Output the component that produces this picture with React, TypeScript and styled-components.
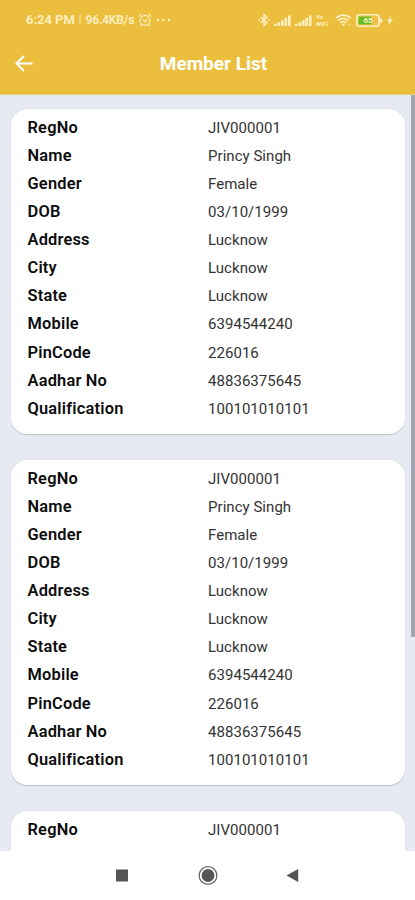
import React from 'react';
import styled, { createGlobalStyle } from 'styled-components';

const GlobalStyle = createGlobalStyle`
  * { box-sizing: border-box; }
  body { margin: 0; background: #fff; font-family: Roboto, "Liberation Sans", sans-serif; }
`;

const Screen = styled.div`
  width: 415px;
  height: 900px;
  display: flex;
  flex-direction: column;
  overflow: hidden;
  background: #fff;
`;

const Header = styled.header`
  flex: none;
  height: 95px;
  background: #ebbf3d;
  border-bottom: 1px solid #efcd6c;
  color: #fff;
`;

const StatusBar = styled.div`
  height: 39px;
  padding: 1px 22px 0 26px;
  display: flex;
  align-items: center;
  justify-content: space-between;
  color: #fff0c4;
`;

const StatusGroup = styled.div<{ $gap: number }>`
  display: flex;
  align-items: center;
  gap: ${({ $gap }) => $gap}px;
`;

const StatusText = styled.span<{ $size: number; $spacing?: number; $weight?: number }>`
  font-size: ${({ $size }) => $size}px;
  font-weight: ${({ $weight }) => $weight ?? 600};
  letter-spacing: ${({ $spacing }) => $spacing ?? 0}px;
  line-height: 16px;
  white-space: nowrap;
`;

const VoWifi = styled.span`
  display: flex;
  flex-direction: column;
  width: 15px;
  font-size: 6px;
  font-weight: 700;
  line-height: 7px;
`;

const TitleBar = styled.div`
  height: 50px;
  padding: 0 2px 0 14px;
  display: grid;
  grid-template-columns: 20px 1fr 20px;
  align-items: center;
`;

const Title = styled.h1`
  margin: 0;
  text-align: center;
  font-size: 19px;
  font-weight: 700;
  line-height: 24px;
`;

const Content = styled.main`
  flex: none;
  height: 756px;
  display: flex;
  overflow: hidden;
  background: #e7e9f3;
`;

const CardList = styled.div`
  flex: 1;
  padding: 14px 6px 0 11px;
  display: flex;
  flex-direction: column;
  gap: 26px;
`;

const Card = styled.section`
  flex: none;
  height: 325px;
  padding: 5px 17px 0 16.5px;
  background: #fff;
  border-radius: 16px;
  box-shadow: 0 0.5px 1px rgba(70, 72, 85, 0.25);
`;

const Row = styled.div`
  height: 28.07px;
  display: grid;
  grid-template-columns: 180.5px 1fr;
  align-items: center;
  line-height: 28px;
  white-space: nowrap;
`;

const Label = styled.span`
  color: #0c0c0c;
  font-size: 16.4px;
  font-weight: 600;
  letter-spacing: 0.2px;
`;

const Value = styled.span`
  color: #333;
  font-size: 15px;
  font-weight: 400;
  letter-spacing: 0.04px;
`;

const ScrollTrack = styled.div`
  flex: none;
  width: 4px;
`;

const ScrollThumb = styled.div`
  height: 542px;
  background: #a0a6b1;
`;

const NavBar = styled.nav`
  flex: 1;
  display: flex;
  justify-content: center;
  padding: 14px 4px 0 0;
`;

const Icon = styled.svg`
  display: block;
  flex: none;
`;

type Member = [label: string, value: string][];

const profile: Member = [
  ['RegNo', 'JIV000001'],
  ['Name', 'Princy Singh'],
  ['Gender', 'Female'],
  ['DOB', '03/10/1999'],
  ['Address', 'Lucknow'],
  ['City', 'Lucknow'],
  ['State', 'Lucknow'],
  ['Mobile', '6394544240'],
  ['PinCode', '226016'],
  ['Aadhar No', '48836375645'],
  ['Qualification', '100101010101'],
];

const members: Member[] = [profile, profile, [['RegNo', 'JIV000001']]];

const MemberCard = ({ member }: { member: Member }) => (
  <Card>
    {member.map(([label, value]) => (
      <Row key={label}>
        <Label>{label}</Label>
        <Value>{value}</Value>
      </Row>
    ))}
  </Card>
);

const Signal = () => (
  <Icon width="17" height="11" viewBox="0 0 17 11" fill="currentColor">
    <path d="M0 8.8h2.6V11H0zM3.5 7.2h2.6V11H3.5zM7 5h2.6v6H7zM10.5 2.8h2.6V11h-2.6zM14 .5h2.6V11H14z" />
  </Icon>
);

const Alarm = () => (
  <Icon width="14" height="14" viewBox="0 0 14 14" fill="none" stroke="currentColor" strokeWidth="1.1" strokeLinecap="round">
    <circle cx="7" cy="7.4" r="5" />
    <path d="M1 3.2 3.3 1.2M13 3.2 10.7 1.2M4.8 6.8 7 8.5 9.3 6.8M3.4 11.5 2.4 12.8M10.6 11.5l1 1.3" />
  </Icon>
);

const Dots = () => (
  <Icon width="15" height="4" viewBox="0 0 15 4" fill="currentColor">
    <circle cx="1.8" cy="2" r="1.2" />
    <circle cx="7.4" cy="2" r="1.2" />
    <circle cx="13" cy="2" r="1.2" />
  </Icon>
);

const Bluetooth = () => (
  <Icon width="12" height="14" viewBox="0 0 12 14" fill="none" stroke="currentColor" strokeWidth="1.4">
    <path d="M2.5 4 9 9.8 6 12.5v-11L9 4.2 2.5 10" />
    <path d="M.3 7h1.8M9.9 7h1.8" />
  </Icon>
);

const Wifi = () => (
  <Icon width="17" height="13" viewBox="0 0 17 13" fill="none" stroke="currentColor" strokeWidth="1.7">
    <path d="M.8 4.1C5.2.1 11.4.1 15.8 4.1M3.1 6.6c3.1-2.8 7.3-2.8 10.4 0M5.4 9c1.7-1.5 4.1-1.5 5.8 0" />
    <path d="m8.3 12.2-1.8-1.9c1-.8 2.6-.8 3.6 0z" fill="currentColor" stroke="none" />
    <path d="M13.5 9.5v2.5M15.3 9.5v2.5" strokeWidth=".8" opacity=".6" />
  </Icon>
);

const Battery = () => (
  <Icon width="27" height="13" viewBox="0 0 27 13">
    <rect x=".8" y=".8" width="22.2" height="11.4" rx="2.2" fill="#efc04c" stroke="#fff0c4" strokeWidth="1.6" />
    <path d="M23.6 3.2 26.6 6v1l-3 2.8z" fill="#fff0c4" />
    <rect x="2.6" y="2.6" width="12.6" height="7.8" fill="#66bd20" />
    <text x="12" y="9.4" textAnchor="middle" fontSize="8" fontWeight="700" fill="#fff0c4">65</text>
  </Icon>
);

const Bolt = () => (
  <Icon width="6" height="11" viewBox="0 0 6 11" fill="currentColor">
    <path d="M4.2.4 0 6.2h2.2l-.7 4.4L6 4.6H3.6z" />
  </Icon>
);

const App = () => (
  <>
    <GlobalStyle />
    <Screen>
      <Header>
        <StatusBar>
          <StatusGroup $gap={4}>
            <StatusText $size={13}>6:24 PM</StatusText>
            <StatusText $size={11} $weight={400}>|</StatusText>
            <StatusText $size={12} $spacing={-0.15}>96.4KB/s</StatusText>
            <Alarm />
            <Dots />
          </StatusGroup>
          <StatusGroup $gap={4}>
            <Bluetooth />
            <Signal />
            <Signal />
            <VoWifi><span>Vo</span><span>WiFi</span></VoWifi>
            <Wifi />
            <Battery />
            <Bolt />
          </StatusGroup>
        </StatusBar>
        <TitleBar>
          <Icon width="20" height="20" viewBox="0 0 20 20" fill="none" stroke="#fff" strokeWidth="2">
            <path d="M18.5 9.5H3M10 2 2.5 9.5 10 17" />
          </Icon>
          <Title>Member List</Title>
        </TitleBar>
      </Header>
      <Content>
        <CardList>
          {members.map((member, index) => (
            <MemberCard key={index} member={member} />
          ))}
        </CardList>
        <ScrollTrack>
          <ScrollThumb />
        </ScrollTrack>
      </Content>
      <NavBar>
        <Icon width="192" height="22" viewBox="0 0 192 22">
          <rect x="6" y="4.5" width="12" height="12" fill="#555" />
          <circle cx="98" cy="10.5" r="8.9" fill="#fff" stroke="#666" strokeWidth="1.3" />
          <circle cx="98" cy="10.5" r="6.4" fill="#555" />
          <path d="M176.5 10.5 188.2 4v13z" fill="#555" />
        </Icon>
      </NavBar>
    </Screen>
  </>
);

export default App;
